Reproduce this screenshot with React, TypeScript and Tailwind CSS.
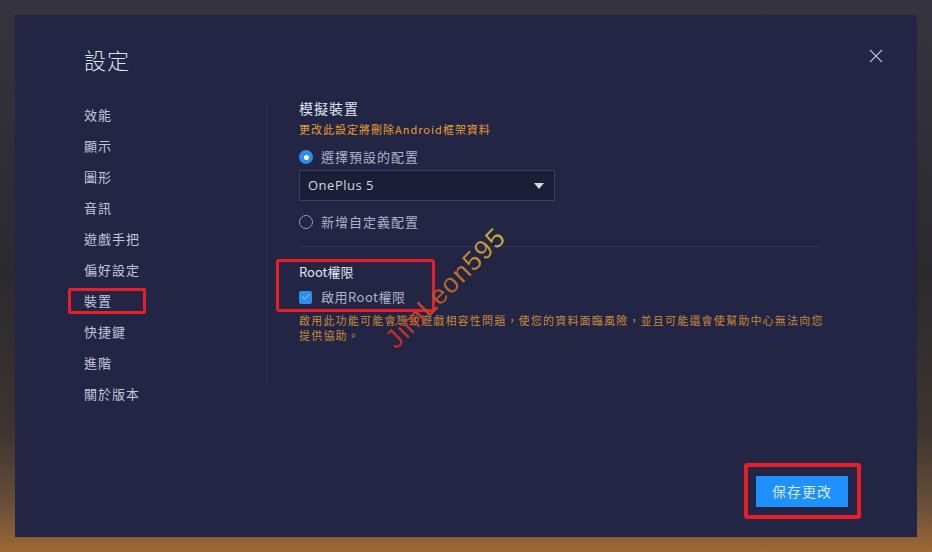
import { Check } from "lucide-react";

const font = { fontFamily: '"Noto Sans CJK TC", "Noto Sans", sans-serif' };

const menu = ["效能", "顯示", "圖形", "音訊", "遊戲手把", "偏好設定", "裝置", "快捷鍵", "進階", "關於版本"];

const Radio = ({ checked, label }: { checked?: boolean; label: string }) => (
  <div className="flex items-center h-[20px]">
    {checked ? (
      <span className="w-[14px] h-[14px] rounded-full bg-[#2d8cf0] flex items-center justify-center">
        <span className="w-[5px] h-[5px] rounded-full bg-white" />
      </span>
    ) : (
      <span className="w-[14px] h-[14px] rounded-full border-[1.5px] border-[#9a9db3]" />
    )}
    <span className="ml-[8px] text-[13px] tracking-[1px] text-[#aeb2c8]">{label}</span>
  </div>
);

export default function App() {
  return (
    <div
      className="w-[932px] h-[552px] overflow-hidden pt-[15px] pl-[15px] bg-[linear-gradient(180deg,#35333d_0%,#2b2a2f_50%,#3d342e_78%,#6a5038_92%,#a06834_100%)]"
      style={font}
    >
      <div className="relative w-[902px] h-[522px] bg-[#222543] flex flex-col">
        {/* header */}
        <div className="flex items-start justify-between pl-[69px] pr-[34px] pt-[30px]">
          <h1 className="text-[22px] leading-[28px] tracking-[1px] text-[#dfe2f0] font-light">設定</h1>
          <svg width="14" height="14" viewBox="0 0 14 14" className="mt-[4px]">
            <path d="M1 1L13 13M13 1L1 13" stroke="#b9bdd8" strokeWidth="1.1" />
          </svg>
        </div>

        <div className="flex mt-[27px]">
          {/* sidebar */}
          <ul className="w-[252px] pl-[69px] border-r border-[#2e3252] h-[285px] mt-[-1px]">
            {menu.map((m) => (
              <li key={m} className="h-[31px] leading-[31px] text-[13px] tracking-[1px] text-[#c3c7dc]">
                {m === "裝置" ? (
                  <span className="relative inline-block">
                    <span className="border-b-2 border-[#2d8cf0] pb-[1px]">{m}</span>
                    <span className="absolute left-[-16px] top-[3px] w-[78px] h-[26px] border-[3px] border-[#e81d25] rounded-[2px]" />
                  </span>
                ) : (
                  m
                )}
              </li>
            ))}
          </ul>

          {/* content */}
          <div className="ml-[32px] w-[530px] mt-[-2px]">
            <h2 className="text-[14px] leading-[20px] tracking-[1px] text-[#dfe2f0]">模擬裝置</h2>
            <p className="mt-[3px] text-[11px] leading-[16px] tracking-[1px] text-[#e79e2f]">更改此設定將刪除Android框架資料</p>
            <div className="mt-[10px]">
              <Radio checked label="選擇預設的配置" />
            </div>
            <div className="mt-[3px] w-[256px] h-[31px] bg-[#1b1e36] border border-[#3b3f5f] flex items-center justify-between pl-[8px] pr-[10px]">
              <span className="text-[13px] tracking-[0.5px] text-[#d4d7e6]" style={{ fontFamily: '"Open Sans", "Noto Sans", sans-serif' }}>
                OnePlus 5
              </span>
              <svg width="10" height="6" viewBox="0 0 10 6">
                <path d="M0 0H10L5 6Z" fill="#d4d7e6" />
              </svg>
            </div>
            <div className="mt-[11px]">
              <Radio label="新增自定義配置" />
            </div>
            <div className="mt-[14px] w-[521px] h-px bg-[#30345a]" />

            <div className="relative mt-[15px]">
              <h2 className="h-[20px] text-[13px] leading-[20px] text-[#e4e6f2]">Root權限</h2>
              <div className="mt-[5px] flex items-center h-[20px]">
                <span className="w-[13px] h-[13px] rounded-[2px] bg-[#2d8cf0] flex items-center justify-center">
                  <Check size={10} strokeWidth={2} className="text-[#cfe4ff]" />
                </span>
                <span className="ml-[9px] text-[13px] tracking-[0.5px] text-[#aeb2c8]">啟用Root權限</span>
              </div>
              <span className="absolute left-[-23px] top-[-3px] w-[159px] h-[53px] border-[3px] border-[#e81d25] rounded-[3px]" />
            </div>
            <p className="mt-[6px] text-[11px] leading-[15px] tracking-[1.2px] text-[#c98a3a]">
              啟用此功能可能會導致遊戲相容性問題，使您的資料面臨風險，並且可能還會使幫助中心無法向您提供協助。
            </p>
          </div>
        </div>

        {/* footer */}
        <div className="mt-auto mb-[30px] mr-[69px] self-end relative">
          <button className="w-[92px] h-[31px] bg-[#1e90ff] text-[14px] tracking-[1px] text-[#d8e8ff]">保存更改</button>
          <span className="absolute left-[-12px] top-[-13px] w-[117px] h-[56px] border-[4px] border-[#e81d25] rounded-[3px]" />
        </div>

        {/* watermark */}
        <span
          className="absolute left-[352px] top-[258px] text-[27px] leading-[30px] font-light tracking-[1px] -rotate-[45deg] bg-[linear-gradient(90deg,#c8242a,#b8602a,#c8b23a)] bg-clip-text text-transparent"
          style={{ fontFamily: '"Liberation Sans", sans-serif' }}
        >
          JimLeon595
        </span>
      </div>
    </div>
  );
}
